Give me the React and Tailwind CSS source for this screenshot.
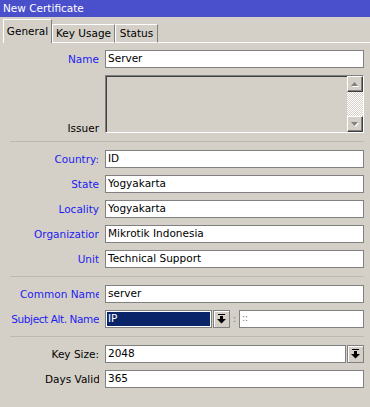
import React from 'react';

const fieldCls = 'h-[18px] flex-1 min-w-0 border border-[#808080] bg-white pl-[2px] flex items-center whitespace-nowrap overflow-hidden text-black';

function Label({ text, blue = true, pad = '' }) {
  return (
    <div
      className={`w-[99px] shrink-0 overflow-hidden whitespace-nowrap text-right leading-[18px] ${pad} ${
        blue ? 'text-[#1c1cf0]' : 'text-black'
      }`}
    >
      {text}
    </div>
  );
}

function Row({ label, blue, pad, children }) {
  return (
    <div className="flex items-center gap-[6px] h-[18px]">
      <Label text={label} blue={blue} pad={pad} />
      {children}
    </div>
  );
}

// knop met streep + pijl omlaag
function DropButton() {
  return (
    <div className="w-[17px] h-[18px] shrink-0 border border-[#808080] bg-[#d4d0c8] shadow-[inset_1px_1px_0_#fff] flex items-center justify-center">
      <svg width="9" height="10" viewBox="0 0 9 10">
        <rect x="1" y="0" width="7" height="1" fill="#000" />
        <rect x="3" y="2" width="3" height="3" fill="#000" />
        <polygon points="0,5 9,5 4.5,9.5" fill="#000" />
      </svg>
    </div>
  );
}

function ScrollBtn({ up }) {
  return (
    <div className="w-[16px] h-[16px] shrink-0 bg-[#d4d0c8] border border-t-white border-l-white border-r-[#404040] border-b-[#404040] shadow-[inset_-1px_-1px_0_#808080] flex items-center justify-center">
      <svg width="8" height="5" viewBox="0 0 8 5">
        {up ? (
          <>
            <polygon points="4.5,1 8,5 1,5" fill="#fff" />
            <polygon points="3.5,0 7,4 0,4" fill="#808080" />
          </>
        ) : (
          <>
            <polygon points="1,1 8,1 4.5,5" fill="#fff" />
            <polygon points="0,0 7,0 3.5,4" fill="#808080" />
          </>
        )}
      </svg>
    </div>
  );
}

function Separator() {
  return <div className="h-px bg-[#bdb9b1] ml-[10px] my-2 shrink-0" />;
}

export default function App() {
  return (
    <div className="w-[370px] h-[407px] overflow-hidden bg-[#d4d0c8] font-['DejaVu_Sans',sans-serif] text-[10.5px] text-black">
      <div className="h-[17px] bg-[#4a4fcb] text-white pl-[3px] leading-[17px]">New Certificate</div>

      {/* tabs */}
      <div className="flex items-end h-[26px] pl-[3px]">
        <div className="h-[24px] w-[49px] border-l border-t border-white border-r border-r-[#808080] flex items-center justify-center">
          General
        </div>
        <div className="h-[19px] w-[63px] border border-white border-r-[#808080] flex items-center justify-center">
          Key Usage
        </div>
        <div className="h-[19px] w-[43px] border border-white border-r-[#808080] flex items-center justify-center">
          Status
        </div>
        <div className="flex-1 border-b border-white" />
      </div>

      <div className="flex flex-col pt-[7px] pr-[6px]">
        <div className="flex flex-col gap-[7px]">
          <Row label="Name">
            <div className={fieldCls}>Server</div>
          </Row>

          <div className="flex items-end gap-[6px]">
            <div className="w-[99px] shrink-0 text-right leading-[12px] mb-[-1px]">Issuer</div>
            <div className="flex-1 h-[58px] border border-t-[#808080] border-l-[#808080] border-r-white border-b-white shadow-[inset_1px_1px_0_#404040] flex justify-end">
              <div className="w-[16px] flex flex-col">
                <ScrollBtn up />
                <div className="flex-1 bg-[repeating-conic-gradient(#ffffff_0%_25%,#d4d0c8_0%_50%)] bg-[length:2px_2px]" />
                <ScrollBtn />
              </div>
            </div>
          </div>
        </div>

        <Separator />

        <div className="flex flex-col gap-[7px]">
          <Row label="Country:">
            <div className={fieldCls}>ID</div>
          </Row>
          <Row label="State">
            <div className={fieldCls}>Yogyakarta</div>
          </Row>
          <Row label="Locality">
            <div className={fieldCls}>Yogyakarta</div>
          </Row>
          <Row label="Organization" pad="pl-[34px]">
            <div className={fieldCls}>Mikrotik Indonesia</div>
          </Row>
          <Row label="Unit">
            <div className={fieldCls}>Technical Support</div>
          </Row>
        </div>

        <Separator />

        <div className="flex flex-col gap-[7px]">
          <Row label="Common Name" pad="pl-[20px]">
            <div className={fieldCls}>server</div>
          </Row>
          <div className="flex items-center gap-[6px] h-[18px]">
            <div className="w-[99px] shrink-0 overflow-hidden whitespace-nowrap text-right leading-[18px] pl-[4px] tracking-[-0.4px] text-[#1c1cf0]">
              Subject Alt. Name
            </div>
            <div className="flex flex-1 items-center">
              <div className="w-[107px] h-[18px] border border-[#808080] shadow-[inset_0_0_0_1px_#fff] bg-[#0a246a] text-white pl-[2px] flex items-center">
                IP
              </div>
              <div className="ml-[1px]">
                <DropButton />
              </div>
              <div className="w-[9px] text-center text-[#808080]">:</div>
              <div className={fieldCls}>
                <span className="text-[#6a6a8a] text-[9px]">::</span>
              </div>
            </div>
          </div>
        </div>

        <Separator />

        <div className="flex flex-col gap-[7px]">
          <Row label="Key Size:" blue={false}>
            <div className="flex flex-1 items-center gap-[1px]">
              <div className={fieldCls}>2048</div>
              <DropButton />
            </div>
          </Row>
          <Row label="Days Valid" blue={false} pad="pl-[45px]">
            <div className={fieldCls}>365</div>
          </Row>
        </div>
      </div>
    </div>
  );
}
